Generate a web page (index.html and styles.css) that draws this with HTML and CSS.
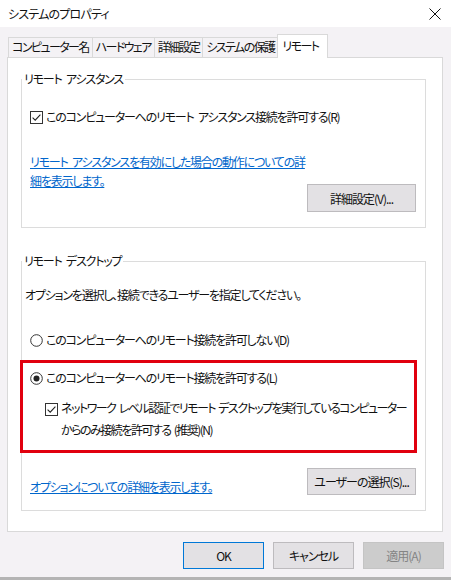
FILE: index.html
```html
<!DOCTYPE html>
<html lang="ja">
<head>
  <meta charset="UTF-8" />
  <meta name="viewport" content="width=device-width, initial-scale=1.0" />
  <title>システムのプロパティ</title>
  <link rel="stylesheet" href="styles.css">
</head>
<body>
  <div class="titlebar">
    <span class="title">システムのプロパティ</span>
    <svg class="close" width="12" height="12" viewBox="0 0 12 12">
      <path d="M0.5 0.5 L11.5 11.5 M11.5 0.5 L0.5 11.5" stroke="#111" stroke-width="1" fill="none" />
    </svg>
  </div>

  <div class="tabs">
    <div class="tab">コンピューター名</div>
    <div class="tab">ハードウェア</div>
    <div class="tab">詳細設定</div>
    <div class="tab">システムの保護</div>
    <div class="tab selected">リモート</div>
  </div>

  <div class="panel">
    <fieldset class="group">
      <legend>リモート アシスタンス</legend>
      <label class="check-row">
        <svg class="box" width="13" height="13" viewBox="0 0 13 13">
          <rect x="0.5" y="0.5" width="12" height="12" fill="#fff" stroke="#333" />
          <path d="M2.6 6.6 L5.2 9.2 L10.4 3.6" stroke="#222" stroke-width="1.1" fill="none" />
        </svg>
        <span>このコンピューターへのリモート アシスタンス接続を許可する(R)</span>
      </label>
      <div class="action-row">
        <a class="link" href="#">リモート アシスタンスを有効にした場合の動作についての詳<br>細を表示します。</a>
        <button class="btn btn-detail">詳細設定(V)...</button>
      </div>
    </fieldset>

    <fieldset class="group group-desktop">
      <legend>リモート デスクトップ</legend>
      <p class="note">オプションを選択し、接続できるユーザーを指定してください。</p>
      <label class="check-row radio-off">
        <svg class="box" width="13" height="13" viewBox="0 0 13 13">
          <circle cx="6.5" cy="6.5" r="5.8" fill="#fff" stroke="#333" />
        </svg>
        <span>このコンピューターへのリモート接続を許可しない(D)</span>
      </label>

      <div class="highlight">
        <label class="check-row">
          <svg class="box" width="13" height="13" viewBox="0 0 13 13">
            <circle cx="6.5" cy="6.5" r="5.8" fill="#fff" stroke="#333" />
            <circle cx="6.5" cy="6.5" r="3" fill="#222" />
          </svg>
          <span>このコンピューターへのリモート接続を許可する(L)</span>
        </label>
        <label class="check-row nla">
          <svg class="box" width="13" height="13" viewBox="0 0 13 13">
            <rect x="0.5" y="0.5" width="12" height="12" fill="#fff" stroke="#333" />
            <path d="M2.6 6.6 L5.2 9.2 L10.4 3.6" stroke="#222" stroke-width="1.1" fill="none" />
          </svg>
          <span>ネットワーク レベル認証でリモート デスクトップを実行しているコンピューター<br>からのみ接続を許可する (推奨)(N)</span>
        </label>
      </div>

      <div class="action-row users">
        <a class="link" href="#">オプションについての詳細を表示します。</a>
        <button class="btn btn-users">ユーザーの選択(S)...</button>
      </div>
    </fieldset>
  </div>

  <div class="footer">
    <button class="btn btn-ok">OK</button>
    <button class="btn">キャンセル</button>
    <button class="btn btn-disabled">適用(A)</button>
  </div>

  <div class="behind"></div>
</body>
</html>
```

FILE: styles.css
```css
body {
  margin: 0;
  width: 451px;
  height: 580px;
  overflow: hidden;
  background-color: #f4f2f5;
  font-family: "Noto Sans CJK JP", "Noto Sans", sans-serif;
  font-feature-settings: "palt";
  font-size: 12px;
  letter-spacing: -1.2px;
  word-spacing: 3px;
  color: #111;
}

.titlebar {
  height: 27px;
  background-color: #fff;
  display: flex;
  align-items: center;
  justify-content: space-between;
  padding: 0 10px 0 8px;
}

.title {
  line-height: 16px;
  letter-spacing: -0.8px;
}

.close {
  display: block;
}

/* タブ */
.tabs {
  display: flex;
  align-items: flex-end;
  padding: 7px 0 0 8px;
}

.tab {
  height: 20px;
  box-sizing: border-box;
  padding: 0 3px;
  line-height: 18px;
  letter-spacing: -1.6px;
  border: 1px solid #d9d9d9;
  border-bottom: none;
  margin-right: -1px;
  white-space: nowrap;
}

.tab.selected {
  height: 24px;
  line-height: 22px;
  margin-bottom: -1px;
  padding: 0 9px 0 4px;
  background-color: #fff;
  position: relative;
  z-index: 1;
}

.panel {
  margin: 0 8px 0 7px;
  border: 1px solid #d9d9d9;
  background-color: #fff;
  padding: 13px 16px 20px 13px;
}

.group {
  margin: 0;
  min-width: 0;
  border: 1px solid #dcdcdc;
  padding: 22px 9px 15px 8px;
}

.group + .group {
  margin-top: 25px;
}

.group legend {
  padding: 0 2px;
  margin-left: -8px;
  line-height: 16px;
}

.group-desktop {
  padding-top: 18px;
  padding-bottom: 14px;
}

.check-row {
  display: flex;
  align-items: center;
  gap: 3px;
  line-height: 16px;
  white-space: nowrap;
}

.box {
  display: block;
  flex-shrink: 0;
}

.action-row {
  display: flex;
  justify-content: space-between;
  align-items: flex-start;
  margin-top: 27px;
}

.link {
  color: #0066cc;
  line-height: 19px;
  white-space: nowrap;
}

.btn {
  font-family: inherit;
  font-feature-settings: "palt";
  font-size: 12px;
  letter-spacing: -1px;
  color: #111;
  background-color: #e3e1e4;
  border: 1px solid #bdbbbe;
  padding: 0;
  height: 27px;
  width: 81px;
  white-space: nowrap;
}

.btn-detail {
  width: 109px;
  height: 28px;
  margin-top: 32px;
}

.btn-users {
  width: 109px;
}

.users {
  margin-top: 15px;
}

.users .link {
  margin-top: 9px;
}

.note {
  margin: 0 0 0 -5px;
  line-height: 16px;
}

.radio-off {
  margin-top: 29px;
}

/* 赤枠 */
.highlight {
  margin: 12px -1px 0 -10px;
  border: 3px solid #e1000e;
  padding: 7px 0 9px 7px;
}

.nla {
  align-items: flex-start;
  margin: 11px 0 0 15px;
  line-height: 22px;
  letter-spacing: -1.5px;
  word-spacing: 2px;
}

.nla .box {
  margin-top: 6px;
}

.footer {
  display: flex;
  justify-content: flex-end;
  gap: 9px;
  margin-top: 10px;
  padding-right: 7px;
}

.btn-ok {
  border-color: #0078d7;
}

.btn-disabled {
  background-color: #cccccc;
  border-color: #c4c4c4;
  color: #848484;
}

.behind {
  margin-top: 8px;
  height: 4px;
  background-color: #b4b4b4;
}
```
